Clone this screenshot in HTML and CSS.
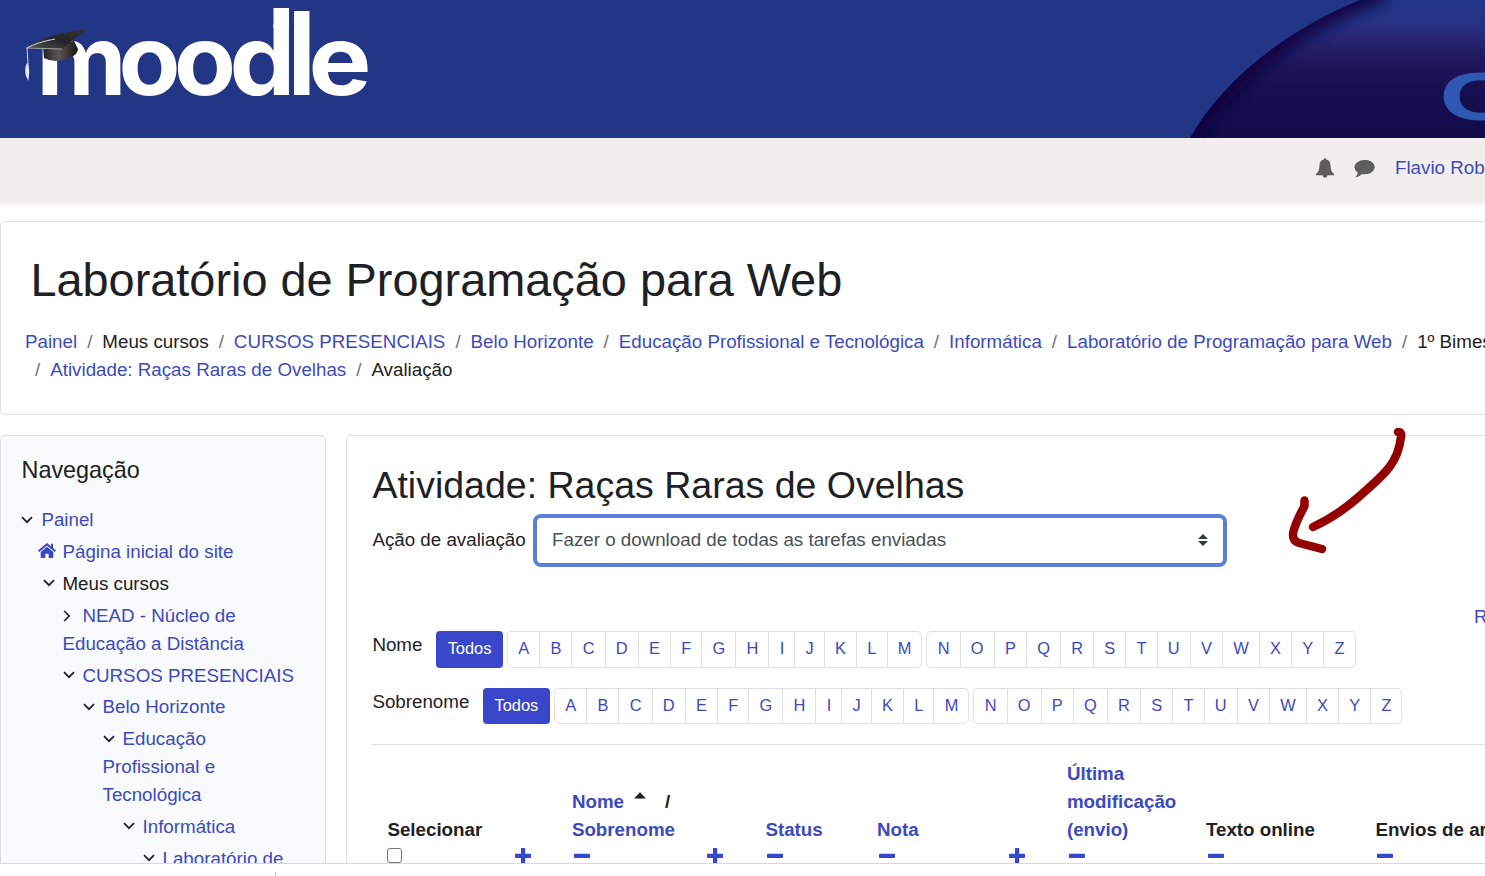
FILE: index.html
```html
<!DOCTYPE html>
<html lang="pt-BR">
<head>
<meta charset="utf-8">
<title>Laboratório de Programação para Web</title>
<link rel="stylesheet" href="styles.css">
</head>
<body>
<svg class="sprite" aria-hidden="true">
  <symbol id="down" viewBox="0 0 12 8"><path d="M1 1.2 6 6.2 11 1.2" fill="none" stroke="#1d2125" stroke-width="1.7"/></symbol>
  <symbol id="right" viewBox="0 0 8 12"><path d="M1.2 1 6.2 6 1.2 11" fill="none" stroke="#1d2125" stroke-width="1.7"/></symbol>
  <symbol id="plus" viewBox="0 0 16 16"><path d="M6.8 0h2.6q.8 0 .8.8v5h5q.8 0 .8.8v2.6q0 .8-.8.8h-5v5q0 .8-.8.8H6.8q-.8 0-.8-.8v-5H.8q-.8 0-.8-.8V6.600q0-.8.8-.8H6v-5q0-.8.8-.8z"/></symbol>
  <symbol id="minus" viewBox="0 0 16 16"><rect y="5.800" width="16" height="4.200" rx=".8"/></symbol>
</svg>
<div class="viewport">
  <header class="banner">
    <svg width="1485" height="138" viewBox="0 0 1485 138">
      <defs>
        <linearGradient id="dome" x1="0" y1="0" x2="0" y2="138" gradientUnits="userSpaceOnUse">
          <stop offset="0" stop-color="#22368a"/><stop offset=".16" stop-color="#283184"/><stop offset=".3" stop-color="#272370"/><stop offset=".46" stop-color="#1e1659"/><stop offset=".65" stop-color="#170f51"/><stop offset="1" stop-color="#120b4a"/>
        </linearGradient>
        <linearGradient id="cap" x1="0" y1="1" x2="1" y2="0"><stop offset="0" stop-color="#555"/><stop offset=".5" stop-color="#242426"/><stop offset="1" stop-color="#343434"/></linearGradient>
        <linearGradient id="capBase"><stop offset="0" stop-color="#222"/><stop offset=".45" stop-color="#5a5654"/><stop offset="1" stop-color="#171717"/></linearGradient>
        <clipPath id="domeClip"><path d="M1190 138C1222 82 1282 32 1360 0H1485V138Z"/></clipPath>
        <filter id="soft" x="-20%" y="-20%" width="140%" height="140%"><feGaussianBlur stdDeviation="8"/></filter>
      </defs>
      <g clip-path="url(#domeClip)">
        <rect x="1180" width="305" height="138" fill="url(#dome)"/>
        <path d="M1177 160C1216 82 1282 28 1385 -12" fill="none" stroke="#10003f" stroke-width="22" filter="url(#soft)"/>
      </g>
      <text class="banner-c" x="1439" y="120" textLength="80" lengthAdjust="spacingAndGlyphs">C</text>
      <g class="logo">
        <text x="36.500" y="95" textLength="90" lengthAdjust="spacingAndGlyphs">m</text>
        <text x="118.500" y="95" textLength="62" lengthAdjust="spacingAndGlyphs">o</text>
        <text x="174" y="95" textLength="62" lengthAdjust="spacingAndGlyphs">o</text>
        <text x="229.500" y="95" textLength="66" lengthAdjust="spacingAndGlyphs">d</text>
        <text transform="translate(287.500 95) scale(1.080 1.190)">l</text>
        <text x="308.500" y="95" textLength="63" lengthAdjust="spacingAndGlyphs">e</text>
        <rect x="273.500" y="8" width="15.500" height="20"/>
      </g>
      <path d="M43 47 44 58Q55 64 70 58 78 54 78 49L74 41Z" fill="url(#capBase)"/>
      <path d="M26 47Q47 34 87 29L62 49Z" fill="url(#cap)"/>
      <path d="M26 48 62 49" stroke="#a4a4a4" stroke-width="1"/>
      <path d="M55 39Q38 42 27 48L28 64" fill="none" stroke="#c9d6e8"/>
      <path d="M27 63Q24 69 26 76L28.500 81Q30 72 28.500 64Z" fill="#dcecf8"/>
    </svg>
  </header>
  <nav class="navbar">
    <svg class="bell" width="20" height="20" viewBox="0 0 20 20"><path d="M10 0q1.100 0 1.300 1.500Q15.500 2.500 15.500 7.500q0 6 3.600 8.500v1.300h-6.600q-.3 2.500-2.500 2.500t-2.500-2.500H.9V16q3.600-2.500 3.600-8.500 0-5 4.200-6Q8.900 0 10 0z"/></svg>
    <svg class="chat" width="21" height="18" viewBox="0 0 21 18"><path d="M10.500 0C16.500 0 20.500 3 20.500 7s-4 7.200-10 7.200q-1.300 0-2.500-.2-2.200 2.500-6.300 3.500-.4-.4 0-.8 2-2 2.100-4.300Q.5 10 .5 7 .5 3 10.500 0z"/><ellipse cx="10.500" cy="7" rx="10" ry="7"/></svg>
    <a>Flavio Roberto</a>
  </nav>
  <section class="card page-head">
    <h1>Laboratório de Programação para Web</h1>
    <div class="crumbs">
      <div><a>Painel</a><i>/</i><span>Meus cursos</span><i>/</i><a>CURSOS PRESENCIAIS</a><i>/</i><a>Belo Horizonte</a><i>/</i><a>Educação Profissional e Tecnológica</a><i>/</i><a>Informática</a><i>/</i><a>Laboratório de Programação para Web</a><i>/</i><span>1º Bimestre</span></div>
      <div><i>/</i><a>Atividade: Raças Raras de Ovelhas</a><i>/</i><span>Avaliação</span></div>
    </div>
  </section>
  <div class="columns">
    <aside class="card tree">
      <h5>Navegação</h5>
      <p class="l0"><svg class="dn"><use href="#down"/></svg><a>Painel</a></p>
      <p class="l1 site"><svg class="home" width="18" height="16" viewBox="0 0 18 16"><path d="M9 3.800 15.300 9v5.200q0 .8-.8.8h-3.800v-4.200H7.300V15H3.500q-.8 0-.8-.8V9z"/><path d="M.6 8.200 9 1.200 17.400 8.200M14 .8V5" fill="none" stroke="#3846cb" stroke-width="2"/></svg><a>Página inicial do site</a></p>
      <p class="l1"><svg class="dn"><use href="#down"/></svg><span>Meus cursos</span></p>
      <p class="l2"><svg class="rt"><use href="#right"/></svg><a>NEAD - Núcleo de<br>Educação a Distância</a></p>
      <p class="l2"><svg class="dn"><use href="#down"/></svg><a>CURSOS PRESENCIAIS</a></p>
      <p class="l3"><svg class="dn"><use href="#down"/></svg><a>Belo Horizonte</a></p>
      <p class="l4"><svg class="dn"><use href="#down"/></svg><a>Educação<br>Profissional e<br>Tecnológica</a></p>
      <p class="l5"><svg class="dn"><use href="#down"/></svg><a>Informática</a></p>
      <p class="l6"><svg class="dn"><use href="#down"/></svg><a>Laboratório de</a></p>
    </aside>
    <main class="card content">
      <h2>Atividade: Raças Raras de Ovelhas</h2>
      <div class="action"><label>Ação de avaliação</label>
        <div class="select"><span>Fazer o download de todas as tarefas enviadas</span><svg width="10" height="12" viewBox="0 0 10 12"><path d="M0 5 5 0l5 5zM0 7h10l-5 5z" fill="#343a40"/></svg></div>
      </div>
      <div class="reset"><a>Redefinir</a></div>
      <div class="initials"><label>Nome</label><b>Todos</b>
        <div class="group"><a>A</a><a>B</a><a>C</a><a>D</a><a>E</a><a>F</a><a>G</a><a>H</a><a>I</a><a>J</a><a>K</a><a>L</a><a>M</a></div>
        <div class="group"><a>N</a><a>O</a><a>P</a><a>Q</a><a>R</a><a>S</a><a>T</a><a>U</a><a>V</a><a>W</a><a>X</a><a>Y</a><a>Z</a></div>
      </div>
      <div class="initials surname"><label>Sobrenome</label><b>Todos</b>
        <div class="group"><a>A</a><a>B</a><a>C</a><a>D</a><a>E</a><a>F</a><a>G</a><a>H</a><a>I</a><a>J</a><a>K</a><a>L</a><a>M</a></div>
        <div class="group"><a>N</a><a>O</a><a>P</a><a>Q</a><a>R</a><a>S</a><a>T</a><a>U</a><a>V</a><a>W</a><a>X</a><a>Y</a><a>Z</a></div>
      </div>
      <div class="grades">
        <div class="cell"><span>Selecionar</span><i class="box"></i></div>
        <div class="cell"><svg class="ic plus"><use href="#plus"/></svg></div>
        <div class="cell"><span><a>Nome</a><svg class="sort" width="12" height="7" viewBox="0 0 12 7"><path d="M0 6.500 6 .3l6 6.200z" fill="#1d2125"/></svg>/<br><a>Sobrenome</a></span><svg class="ic"><use href="#minus"/></svg></div>
        <div class="cell"><svg class="ic plus"><use href="#plus"/></svg></div>
        <div class="cell"><a>Status</a><svg class="ic"><use href="#minus"/></svg></div>
        <div class="cell"><a>Nota</a><svg class="ic"><use href="#minus"/></svg></div>
        <div class="cell"><svg class="ic plus"><use href="#plus"/></svg></div>
        <div class="cell"><a>Última<br>modificação<br>(envio)</a><svg class="ic"><use href="#minus"/></svg></div>
        <div class="cell"><span>Texto online</span><svg class="ic"><use href="#minus"/></svg></div>
        <div class="cell"><span>Envios de arquivo</span><svg class="ic"><use href="#minus"/></svg></div>
      </div>
    </main>
  </div>
</div>
<footer class="tick"></footer>
<svg class="arrow" width="130" height="140" viewBox="1280 420 130 140" fill="none" stroke="#940000" stroke-linecap="round" stroke-linejoin="round">
  <path d="M1398 432Q1402 432 1401 437C1398 462 1387 472 1362 494Q1339 515 1313 527" stroke-width="8.500"/>
  <path d="M1304.500 500.500V506C1296 522 1293 530 1293 535Q1293 541 1299 543L1322 549" stroke-width="8.500"/>
</svg>
</body>
</html>
```
FILE: styles.css
```css
* { box-sizing: border-box; }
body { margin: 0; height: 876px; overflow: hidden; background: #fff; color: #1d2125; font: 18.75px/28px "Liberation Sans", Arial, sans-serif; }
h1, h2, h5, p { margin: 0; font-weight: 400; }
a { color: #3c4ac0; }
.sprite { display: none; }
.viewport { height: 864px; overflow: hidden; border-bottom: 1px solid #d6d8da; }
.banner { height: 138px; background: #233686; }
.banner svg { display: block; }
.logo { fill: #fff; font: 700 97px Inter, sans-serif; }
.banner-c { fill: #2e58b1; font: bold 69px "Liberation Sans", sans-serif; }
.navbar { display: flex; height: 64px; padding: 16px 0 0 1315px; background: #f2eeed; box-shadow: 0 2px 4px rgba(0, 0, 0, .08); white-space: nowrap; fill: #5e5e5e; }
.bell { flex: none; margin-top: 4px; }
.chat { flex: none; margin: 6px 20px 0 19px; }
.card { border: 1px solid #dcdedf; border-radius: 5px; }
.page-head { width: 1500px; height: 194px; margin-top: 19px; padding: 30px 24px; }
h1 { padding-left: 5.400px; font-size: 46.875px; line-height: 56px; }
.crumbs { margin-top: 20px; white-space: nowrap; }
.crumbs i { padding: 0 10px; color: #6a737b; font-style: normal; }
.columns { display: flex; gap: 20px; margin-top: 20px; }
.tree { flex: none; width: 326px; height: 480px; padding: 20px; background: #f8fafc; }
h5 { margin-bottom: 22px; padding-left: .5px; font-size: 23.4px; }
.tree p { margin-bottom: 3.750px; white-space: nowrap; text-indent: -21px; }
.tree .l1 { margin-bottom: 4px; }
.tree svg { vertical-align: middle; overflow: visible; }
.dn { width: 12px; height: 8px; margin: -3px 8px 0 1px; }
.rt { width: 8px; height: 12px; margin: -2px 12px 0 0; }
.home { margin: -4px 7px 0 -4px; fill: #3846cb; }
.l0 { padding-left: 20.400px; }
.l1 { padding-left: 41.500px; }
.tree .l2, .tree .l3, .tree .l4, .tree .l5, .tree .l6 { text-indent: 0; }
.tree .l2 .dn, .l3 .dn, .l4 .dn, .l5 .dn, .l6 .dn { margin-left: 0; }
.l2 { padding-left: 41.500px; }
.l3 { padding-left: 61.500px; }
.l4 { padding-left: 81.500px; }
.l5 { padding-left: 101.500px; }
.l6 { padding-left: 121.500px; }
.content { flex: none; width: 1200px; height: 480px; padding: 27px 26px 27px 25.400px; border-bottom: 0; }
h2 { font-size: 37.5px; line-height: 45px; }
.action { display: flex; align-items: center; gap: 7px; margin-top: 6px; height: 53px; }
.action label { margin-bottom: 2px; }
.select { display: flex; align-items: center; justify-content: space-between; width: 694px; height: 53px; padding: 0 15px 2px 15.400px; border: 4.5px solid #5a80d5; border-radius: 8px; color: #495057; }
.reset { height: 29px; margin-top: 36px; padding-left: 1101.500px; white-space: nowrap; }
.reset + .initials { margin-top: -1px; }
.initials { display: flex; height: 57px; font-size: 16.4px; line-height: 33px; }
.initials label { margin-right: 13.600px; font-size: 18.75px; line-height: 28px; }
.initials b { height: 37px; padding: 1px 11px; border-radius: 4px; background: #3b47cb; color: #fff; font-weight: 400; width: 67px; text-align: center; }
.group { display: flex; height: 37px; margin-left: 4px; border: 1px solid #dee0e2; border-right: 0; border-radius: 5px; }
.surname { height: 56px; }
.surname b, .surname .group { height: 36px; }
.group a { padding: 0 10.050px 0 10.250px; border-right: 1px solid #dee0e2; }
.group a:last-child { border-radius: 0 5px 5px 0; }
.grades { display: grid; grid-template-columns: 127.500px 57px 135.500px 58px 111.500px 132px 58px 139px 169.500px 200px; height: 140px; margin-right: -40px; padding: 15px 0 0 15px; border-top: 1px solid #dcdedf; font-weight: 700; white-space: nowrap; }
.cell { display: flex; flex-direction: column; justify-content: flex-end; height: 103px; }
.ic { flex: none; width: 16px; height: 16px; margin: 4px 0 -1px 2px; fill: #3846cb; }
.plus { margin-left: 0; }
.box { width: 15px; height: 15px; margin: 4px 0 0 -.5px; border: 1.3px solid #767676; border-radius: 3px; }
.sort { margin: 0 19px 9px 10px; }
.tick { width: 276px; height: 4px; margin-top: 8px; border-right: 1px solid #c8cacc; }
.arrow { position: absolute; left: 1280px; top: 420px; }
```
